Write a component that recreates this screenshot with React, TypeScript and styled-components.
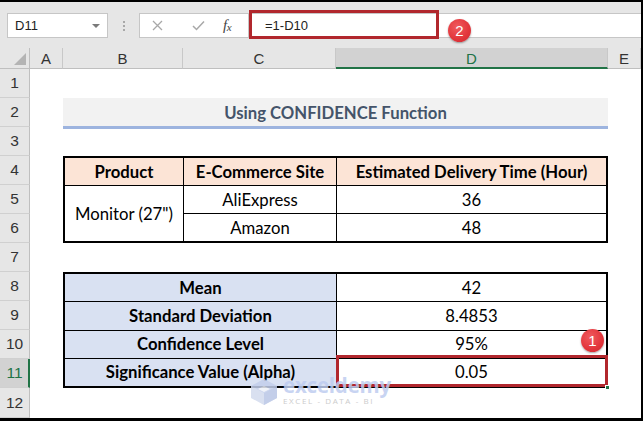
import React from "react";
import styled, { createGlobalStyle } from "styled-components";

const GlobalStyle = createGlobalStyle`
  html, body { margin: 0; padding: 0; background: #fff; }
  body { font-family: "Liberation Sans", Arial, sans-serif; }
  * { box-sizing: border-box; }
`;

const Frame = styled.div`
  width: 643px;
  height: 421px;
  border-top: 2px solid #000;
  border-right: 2px solid #000;
  border-bottom: 3px solid #000;
  background: #fff;
  display: flex;
  flex-direction: column;
  position: relative;
  overflow: hidden;
`;

const Toolbar = styled.div`
  height: 46px;
  flex-shrink: 0;
  background: #e6e6e6;
  display: flex;
  align-items: flex-start;
  padding: 11px 0 0 7px;
`;

const NameBox = styled.div`
  width: 101px;
  height: 25px;
  background: #fff;
  border: 1px solid #c6c6c6;
  display: flex;
  align-items: center;
  justify-content: space-between;
  padding: 0 7px 0 7px;
  font-size: 13px;
  color: #222;
`;

const Arrow = styled.span`
  width: 0;
  height: 0;
  border-left: 4px solid transparent;
  border-right: 4px solid transparent;
  border-top: 4px solid #7a7a7a;
`;

const Grip = styled.div`
  margin-left: 15px;
  height: 25px;
  display: flex;
  flex-direction: column;
  justify-content: center;
  gap: 2px;
`;

const GripDot = styled.span`
  width: 2px;
  height: 2px;
  background: #a8a8a8;
`;

const FxGroup = styled.div`
  margin-left: 14px;
  width: 109px;
  height: 25px;
  background: #fff;
  border: 1px solid #c6c6c6;
  border-right: none;
  display: flex;
  align-items: center;
  padding-left: 12px;
`;

const IconSlot = styled.span<{ $w: number }>`
  width: ${(p) => p.$w}px;
  display: flex;
  align-items: center;
`;

const FxText = styled.span`
  font-family: "Liberation Serif", "Times New Roman", serif;
  font-style: italic;
  font-size: 15px;
  color: #444;
  letter-spacing: -0.5px;
  & > sub {
    font-size: 11px;
    vertical-align: -1px;
  }
`;

const FormulaInput = styled.div`
  flex: 1;
  height: 25px;
  background: #fff;
  border: 1px solid #c6c6c6;
  border-right: none;
  display: flex;
  align-items: center;
  padding-left: 16px;
  font-size: 13px;
  color: #222;
  position: relative;
`;

const RedBox = styled.div<{ $t: number; $l: number; $r: number; $b: number }>`
  position: absolute;
  top: ${(p) => p.$t}px;
  left: ${(p) => p.$l}px;
  right: ${(p) => p.$r}px;
  bottom: ${(p) => p.$b}px;
  border: 3px solid #b1272d;
  pointer-events: none;
  z-index: 3;
`;

const FormulaRedBox = styled.div`
  position: absolute;
  top: -4px;
  left: 0;
  width: 190px;
  height: 29px;
  border: 3px solid #b1272d;
`;

const Badge = styled.div<{ $x: number; $y: number }>`
  position: absolute;
  left: ${(p) => p.$x}px;
  top: ${(p) => p.$y}px;
  width: 23px;
  height: 23px;
  border-radius: 50%;
  background: radial-gradient(circle at 40% 35%, #f05a5e 0%, #e2353b 60%, #c92a30 100%);
  box-shadow: 0 1px 2px rgba(0, 0, 0, 0.35);
  color: #fff;
  font-family: "Liberation Sans", Arial, sans-serif;
  font-size: 15px;
  display: flex;
  align-items: center;
  justify-content: center;
  z-index: 4;
`;

const Sheet = styled.div`
  flex: 1;
  display: grid;
  grid-template-columns: 30px 33px 120px 153px 272px 33px;
  grid-template-rows: 21px repeat(11, 29px) 1fr;
  position: relative;
`;

const Corner = styled.div`
  grid-row: 1;
  grid-column: 1;
  background: #e6e6e6;
  border-right: 1px solid #bfbfbf;
  border-bottom: 1px solid #bfbfbf;
  display: flex;
  align-items: flex-end;
  justify-content: flex-end;
  padding: 0 3px 3px 0;
`;

const CornerTriangle = styled.span`
  width: 0;
  height: 0;
  border-left: 12px solid transparent;
  border-bottom: 12px solid #b4b4b4;
`;

const ColHead = styled.div<{ $col: number; $selected?: boolean }>`
  grid-row: 1;
  grid-column: ${(p) => p.$col};
  background: ${(p) => (p.$selected ? "#d2d2d2" : "#e6e6e6")};
  border-right: 1px solid #c8c8c8;
  border-bottom: ${(p) => (p.$selected ? "2px solid #217346" : "1px solid #bfbfbf")};
  color: ${(p) => (p.$selected ? "#217346" : "#333")};
  font-size: 15px;
  display: flex;
  align-items: center;
  justify-content: center;
  padding-top: ${(p) => (p.$selected ? "1px" : "0")};
`;

const RowHead = styled.div<{ $row: number; $selected?: boolean }>`
  grid-row: ${(p) => p.$row + 1};
  grid-column: 1;
  background: ${(p) => (p.$selected ? "#d2d2d2" : "#e6e6e6")};
  border-bottom: 1px solid #d0d0d0;
  border-right: ${(p) => (p.$selected ? "2px solid #217346" : "1px solid #bfbfbf")};
  color: ${(p) => (p.$selected ? "#217346" : "#333")};
  font-size: 15.5px;
  display: flex;
  align-items: center;
  justify-content: center;
  padding-left: ${(p) => (p.$selected ? "1px" : "0")};
`;

const Title = styled.div`
  grid-row: 3;
  grid-column: 3 / 6;
  background: #f2f2f2;
  border-bottom: 3px solid #9db4df;
  margin-bottom: -2px;
  display: flex;
  align-items: center;
  justify-content: center;
  font-family: Lato, "Open Sans", sans-serif;
  font-weight: 700;
  font-size: 16.7px;
  color: #44546a;
  padding-top: 1px;
`;

const TableGrid = styled.div<{ $rows: string; $cols: string }>`
  grid-row: ${(p) => p.$rows};
  grid-column: 3 / 6;
  display: grid;
  grid-template-columns: ${(p) => p.$cols};
  grid-auto-rows: 1fr;
  gap: 1px;
  padding: 2px;
  background: #000;
  z-index: 1;
`;

const Cell = styled.div<{ $bg?: string; $bold?: boolean; $span?: number }>`
  background: ${(p) => p.$bg || "#fff"};
  font-family: Lato, "Open Sans", sans-serif;
  font-size: 16.7px;
  font-weight: ${(p) => (p.$bold ? 700 : 400)};
  color: #000;
  display: flex;
  align-items: center;
  justify-content: center;
  grid-row: ${(p) => (p.$span ? `span ${p.$span}` : "auto")};
  position: relative;
  white-space: nowrap;
`;

const SelectedCell = styled(Cell)`
  box-shadow: inset 0 -2px 0 #217346;
`;

const FillHandle = styled.span`
  position: absolute;
  right: -4px;
  bottom: -4px;
  width: 5px;
  height: 5px;
  background: #217346;
  border: 1px solid #fff;
  z-index: 4;
`;

const Watermark = styled.div`
  position: absolute;
  left: 250px;
  top: 376px;
  display: flex;
  align-items: flex-start;
  gap: 5px;
  opacity: 0.85;
  pointer-events: none;
  z-index: 5;
`;

const WmText = styled.div`
  display: flex;
  flex-direction: column;
  line-height: 1;
`;

const WmBrand = styled.span`
  font-family: "Open Sans", "Noto Sans", sans-serif;
  font-weight: 700;
  font-size: 20.5px;
  color: #bfcdf0;
  letter-spacing: -0.2px;
  margin-top: -3px;
`;

const WmSub = styled.span`
  font-family: "Open Sans", "Noto Sans", sans-serif;
  font-size: 8px;
  color: #c4c4c4;
  letter-spacing: 1.6px;
  margin-top: 1px;
`;

const cols = [
  { c: 2, l: "A" },
  { c: 3, l: "B" },
  { c: 4, l: "C" },
  { c: 5, l: "D", sel: true },
  { c: 6, l: "E" },
];

export default function App() {
  return (
    <>
      <GlobalStyle />
      <Frame>
        <Toolbar>
          <NameBox>
            <span>D11</span>
            <Arrow />
          </NameBox>
          <Grip>
            <GripDot />
            <GripDot />
            <GripDot />
          </Grip>
          <FxGroup>
            <IconSlot $w={40}>
              <svg width="11" height="11" viewBox="0 0 11 11">
                <path d="M1 1 L10 10 M10 1 L1 10" stroke="#a8a8a8" strokeWidth="1.3" fill="none" />
              </svg>
            </IconSlot>
            <IconSlot $w={31}>
              <svg width="13" height="11" viewBox="0 0 13 11">
                <path d="M1 6 L4.5 9.5 L12 1.5" stroke="#a8a8a8" strokeWidth="1.5" fill="none" />
              </svg>
            </IconSlot>
            <FxText>
              f<sub>x</sub>
            </FxText>
          </FxGroup>
          <FormulaInput>
            <FormulaRedBox />
            =1-D10
            <Badge $x={199} $y={5}>2</Badge>
          </FormulaInput>
        </Toolbar>
        <Sheet>
          <Corner>
            <CornerTriangle />
          </Corner>
          {cols.map((c) => (
            <ColHead key={c.l} $col={c.c} $selected={c.sel}>
              {c.l}
            </ColHead>
          ))}
          {Array.from({ length: 12 }, (_, i) => (
            <RowHead key={i} $row={i + 1} $selected={i + 1 === 11}>
              {i + 1}
            </RowHead>
          ))}
          <Title>Using CONFIDENCE Function</Title>
          <TableGrid $rows="5 / 8" $cols="118px 152px 1fr">
            <Cell $bg="#fce4d6" $bold>Product</Cell>
            <Cell $bg="#fce4d6" $bold>E-Commerce Site</Cell>
            <Cell $bg="#fce4d6" $bold>Estimated Delivery Time (Hour)</Cell>
            <Cell $span={2}>Monitor (27")</Cell>
            <Cell>AliExpress</Cell>
            <Cell>36</Cell>
            <Cell>Amazon</Cell>
            <Cell>48</Cell>
          </TableGrid>
          <TableGrid $rows="9 / 13" $cols="271px 1fr">
            <Cell $bg="#d9e1f2" $bold>Mean</Cell>
            <Cell>42</Cell>
            <Cell $bg="#d9e1f2" $bold>Standard Deviation</Cell>
            <Cell>8.4853</Cell>
            <Cell $bg="#d9e1f2" $bold>Confidence Level</Cell>
            <Cell>95%</Cell>
            <Cell $bg="#d9e1f2" $bold>Significance Value (Alpha)</Cell>
            <SelectedCell>
              0.05
              <RedBox $t={-4} $l={-1} $r={-2} $b={-1} />
              <Badge $x={244} $y={-30}>1</Badge>
              <FillHandle />
            </SelectedCell>
          </TableGrid>
        </Sheet>
        <Watermark>
          <svg width="28" height="28" viewBox="0 0 28 28">
            <polygon points="14,1 27,8 27,20 14,27 1,20 1,8" fill="#d3dbee" />
            <polygon points="14,1 27,8 14,15 1,8" fill="#c3cfec" />
            <polygon points="8,11 14,8 20,11 14,14" fill="#eef1f8" />
            <polygon points="14,15 27,8 27,20 14,27" fill="#b9c6e6" />
          </svg>
          <WmText>
            <WmBrand>exceldemy</WmBrand>
            <WmSub>EXCEL - DATA - BI</WmSub>
          </WmText>
        </Watermark>
      </Frame>
    </>
  );
}
